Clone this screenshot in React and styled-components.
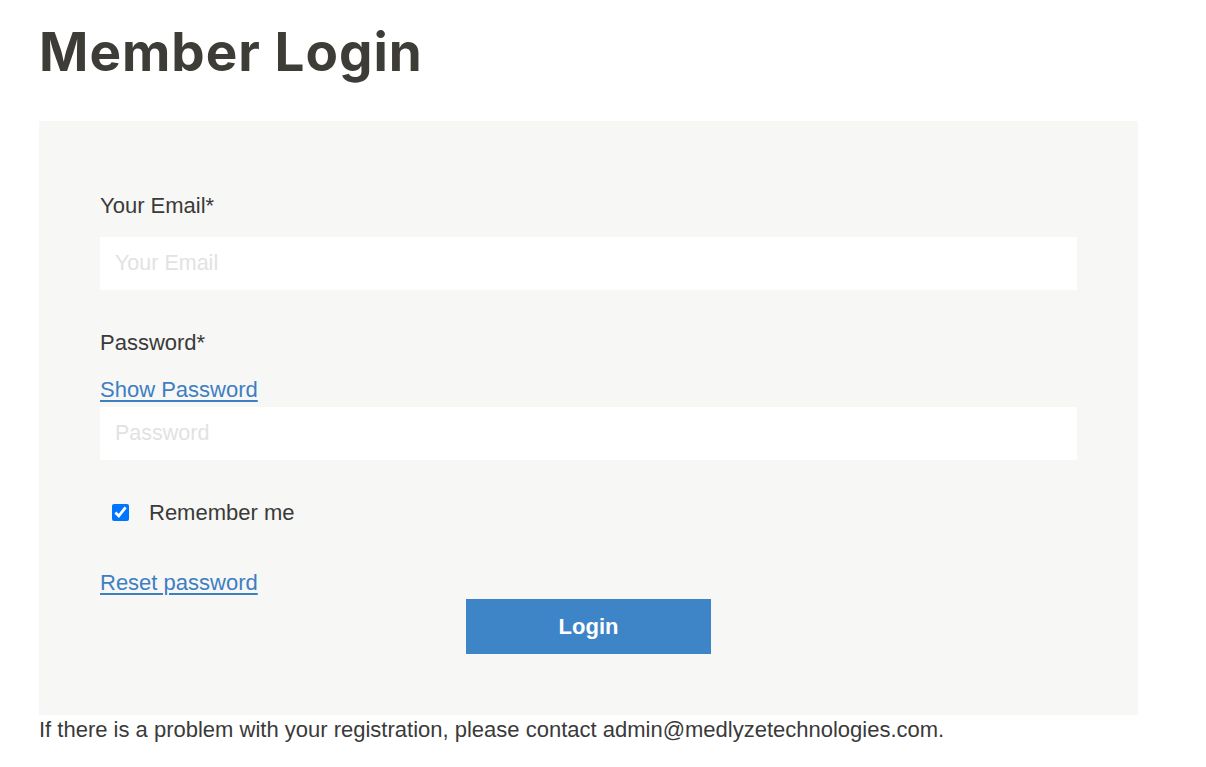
import React from "react";
import styled, { createGlobalStyle } from "styled-components";

const Global = createGlobalStyle`
  html, body { margin: 0; padding: 0; background: #ffffff; }
  body { font-family: "Liberation Sans", Arial, sans-serif; color: #3a3a3a; }
  * { box-sizing: border-box; }
`;

const Page = styled.main`
  padding: 0 68px 0 39px;
  width: 1206px;
`;

const Title = styled.h1`
  margin: 0;
  padding-top: 20px;
  height: 121px;
  font-family: Inter, "Noto Sans", sans-serif;
  font-weight: 700;
  font-size: 53px;
  line-height: 64px;
  letter-spacing: 1px;
  color: #3d3c37;
`;

const Panel = styled.form`
  width: 1099px;
  background: #f7f7f5;
  padding: 68px 61px 61px;
  display: flex;
  flex-direction: column;
`;

const Field = styled.div`
  display: flex;
  flex-direction: column;
  margin-bottom: 36px;
`;

const Label = styled.label`
  font-size: 22px;
  line-height: 33px;
  color: #3a3a3a;
  margin-bottom: ${(p) => p.$gap || 0}px;
`;

const Link = styled.a`
  font-size: 22px;
  line-height: 33px;
  color: #3d7fc2;
  text-decoration: underline;
  text-underline-offset: 3px;
  align-self: flex-start;
  margin-bottom: ${(p) => p.$gap || 0}px;
  cursor: pointer;
`;

const Input = styled.input`
  width: 977px;
  height: 53px;
  border: none;
  outline: none;
  background: #ffffff;
  padding: 0 15px;
  font-family: "Liberation Sans", Arial, sans-serif;
  font-size: 21.5px;
  color: #3a3a3a;
  &::placeholder { color: #e2e2e2; }
`;

const CheckRow = styled.label`
  display: flex;
  align-items: center;
  gap: 20px;
  padding-left: 12px;
  font-size: 22px;
  line-height: 33px;
  margin-bottom: 37px;
`;

const Check = styled.input`
  width: 17px;
  height: 17px;
  margin: 0;
  accent-color: #0075ff;
`;

const Button = styled.button`
  align-self: center;
  width: 245px;
  height: 55px;
  border: none;
  background: #3d85c6;
  color: #ffffff;
  font-family: "Liberation Sans", Arial, sans-serif;
  font-weight: 700;
  font-size: 22px;
`;

const Note = styled.p`
  margin: 0;
  font-size: 22px;
  line-height: 30px;
  color: #3a3a3a;
`;

export default function App() {
  return (
    <Page>
      <Global />
      <Title>Member Login</Title>
      <Panel onSubmit={(e) => e.preventDefault()}>
        <Field>
          <Label $gap={15}>Your Email*</Label>
          <Input type="email" placeholder="Your Email" />
        </Field>
        <Field>
          <Label $gap={14}>Password*</Label>
          <Link $gap={1}>Show Password</Link>
          <Input type="password" placeholder="Password" />
        </Field>
        <CheckRow>
          <Check type="checkbox" defaultChecked />
          Remember me
        </CheckRow>
        <Link>Reset password</Link>
        <Button type="submit">Login</Button>
      </Panel>
      <Note>If there is a problem with your registration, please contact admin@medlyzetechnologies.com.</Note>
    </Page>
  );
}
